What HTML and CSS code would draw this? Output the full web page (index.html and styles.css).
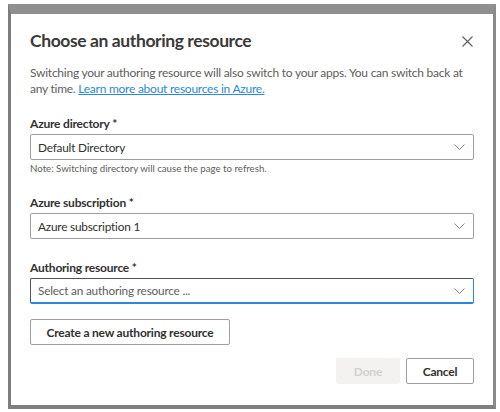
FILE: index.html
```html
<!DOCTYPE html>
<html>
<head>
<meta charset="utf-8">
<link rel="stylesheet" href="styles.css">
</head>
<body>
<div class="frame">
  <div class="dialog">
    <div class="header">
      <h1 class="title">Choose an authoring resource</h1>
      <span class="close"><svg width="11" height="11" viewBox="0 0 11 11"><path d="M0.5 0.5 L10.5 10.5 M10.5 0.5 L0.5 10.5" stroke="#605e5c" stroke-width="1.1" fill="none"/></svg></span>
    </div>
    <p class="intro">Switching your authoring resource will also switch to your apps. You can switch back at<br>any time. <a class="link" href="#">Learn more about resources in Azure.</a></p>

    <div class="field f1">
      <div class="label">Azure directory *</div>
      <div class="select"><span class="value">Default Directory</span><svg class="chev" width="11" height="6" viewBox="0 0 11 6"><path d="M0.5 0.5 L5.5 5.5 L10.5 0.5" stroke="#8a8886" stroke-width="1" fill="none"/></svg></div>
      <div class="note">Note: Switching directory will cause the page to refresh.</div>
    </div>

    <div class="field f2">
      <div class="label">Azure subscription *</div>
      <div class="select"><span class="value">Azure subscription 1</span><svg class="chev" width="11" height="6" viewBox="0 0 11 6"><path d="M0.5 0.5 L5.5 5.5 L10.5 0.5" stroke="#8a8886" stroke-width="1" fill="none"/></svg></div>
    </div>

    <div class="field f3">
      <div class="label">Authoring resource *</div>
      <div class="select focused"><span class="value placeholder">Select an authoring resource ...</span><svg class="chev" width="11" height="6" viewBox="0 0 11 6"><path d="M0.5 0.5 L5.5 5.5 L10.5 0.5" stroke="#8a8886" stroke-width="1" fill="none"/></svg></div>
    </div>

    <div class="create-row"><button class="btn create">Create a new authoring resource</button></div>

    <div class="footer">
      <button class="btn done" disabled>Done</button>
      <button class="btn cancel">Cancel</button>
    </div>
  </div>
</div>
</body>
</html>
```

FILE: styles.css
```css
* { box-sizing: border-box; }
html, body { margin: 0; padding: 0; background: #ffffff; }
body { font-family: Lato, "Noto Sans", sans-serif; color: #323130; }

.frame {
  margin: 4px 0 0 8px;
  width: 488px;
  height: 405px;
  border-top: 10px solid #8f8f8f;
  border-left: 3px solid #7d7d7d;
  border-right: 3px solid #8a8a8a;
  border-bottom: 4px solid #7f7f7f;
  background: #fff;
}
.dialog {
  padding: 13px 19px 0 19px;
  display: flex;
  flex-direction: column;
}
.header {
  display: flex;
  justify-content: space-between;
  align-items: center;
  height: 28px;
}
.title {
  margin: 0;
  font-size: 17.5px;
  font-weight: 700;
  letter-spacing: -0.4px;
  line-height: 28px;
  color: #3b3a39;
  white-space: nowrap;
}
.close { display: flex; margin-right: 1px; }
.intro {
  margin: 10px 0 0 0;
  font-size: 12px;
  letter-spacing: -0.25px;
  line-height: 16px;
  color: #605e5c;
  white-space: nowrap;
}
.link { color: #2b88d8; text-decoration: underline; }
.field { display: flex; flex-direction: column; }
.f1 { margin-top: 18px; }
.f2 { margin-top: 19px; }
.f3 { margin-top: 20px; }
.label {
  font-size: 12px;
  font-weight: 700;
  letter-spacing: -0.2px;
  line-height: 18px;
  color: #323130;
  margin-bottom: 1px;
}
.select {
  height: 26px;
  border: 1px solid #a19f9d;
  border-radius: 2px;
  display: flex;
  align-items: center;
  justify-content: space-between;
  padding: 0 8px 0 7px;
}
.select.focused {
  border: 1px solid #2b88d8;
  border-top-color: #505050;
  border-left-color: #505050;
  border-bottom: 2px solid #2b88d8;
}
.value { font-size: 11.8px; letter-spacing: -0.2px; color: #323130; }
.placeholder { color: #605e5c; }
.note {
  font-size: 9.7px;
  line-height: 14px;
  color: #605e5c;
  margin-top: 1px;
}
.create-row { margin-top: 15px; display: flex; }
.btn {
  font-family: Lato, "Noto Sans", sans-serif;
  font-size: 12px;
  font-weight: 700;
  letter-spacing: -0.2px;
  height: 26px;
  border: 1px solid #a19f9d;
  border-radius: 2px;
  background: #fff;
  color: #323130;
  padding: 0 8px;
  white-space: nowrap;
}
.create { width: 200px; }
.footer {
  margin-top: 13px;
  display: flex;
  justify-content: flex-end;
  gap: 6px;
}
.done {
  width: 64px;
  background: #f3f2f1;
  border-color: #f3f2f1;
  color: #d2d0ce;
}
.cancel { width: 68px; }
```
